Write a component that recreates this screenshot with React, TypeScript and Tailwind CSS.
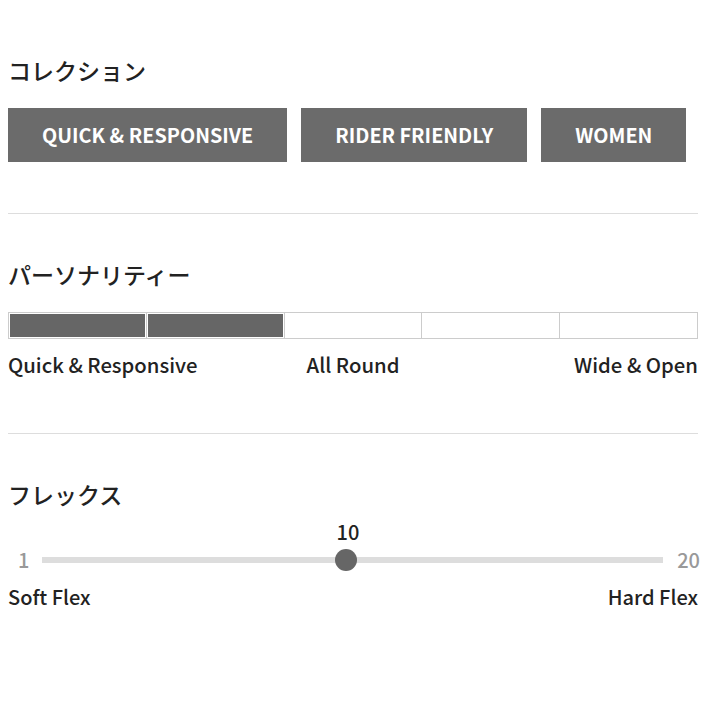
const font = { fontFamily: '"Noto Sans CJK JP", "Noto Sans", sans-serif' };

const collections = ["QUICK & RESPONSIVE", "RIDER FRIENDLY", "WOMEN"];

export default function App() {
  const filled = 2;
  return (
    <div style={font} className="w-[710px] h-[710px] bg-white pl-[8px] pr-[12px] pt-[54px] text-[#222]">
      {/* コレクション */}
      <h2 className="text-[23px] leading-[32px] font-medium">コレクション</h2>
      <div className="mt-[22px] flex gap-[14px]">
        {collections.map((c) => (
          <div
            key={c}
            className="h-[54px] px-[34px] flex items-center bg-[#6b6b6b] text-white text-[19.8px] font-bold"
          >
            {c}
          </div>
        ))}
      </div>
      <div className="mt-[51px] h-px bg-[#dddddd]" />

      {/* パーソナリティー */}
      <h2 className="mt-[44px] text-[23px] leading-[32px] font-medium">パーソナリティー</h2>
      <div className="mt-[22px] flex border border-[#cccccc]">
        {[0, 1, 2, 3, 4].map((i) => (
          <div key={i} className={`flex-1 p-px ${i > 0 ? "border-l border-[#cccccc]" : ""}`}>
            <div className={`h-[23px] ${i < filled ? "bg-[#666666]" : "bg-white"}`} />
          </div>
        ))}
      </div>
      <div className="mt-[11px] grid grid-cols-3 text-[20.3px] leading-[28px] font-medium">
        <span>Quick &amp; Responsive</span>
        <span className="text-center">All Round</span>
        <span className="text-right">Wide &amp; Open</span>
      </div>
      <div className="mt-[55px] h-px bg-[#dddddd]" />

      {/* フレックス */}
      <h2 className="mt-[44px] text-[23px] leading-[32px] font-medium">フレックス</h2>
      <div className="mt-[10px] ml-[318px] w-[44px] text-center text-[20px] leading-[24px] font-medium">10</div>
      <div className="mt-[5px] flex items-center h-[22px]">
        <span className="pl-[10px] w-[20px] text-[20px] text-[#999999] font-medium">1</span>
        <div className="relative flex-1 ml-[14px] mr-[14px] h-[6px] bg-[#dddddd]">
          <div className="absolute top-[-8px] left-[293px] w-[22px] h-[22px] rounded-full bg-[#666666]" />
        </div>
        <span className="text-[20px] text-[#999999] font-medium -mr-[2px]">20</span>
      </div>
      <div className="mt-[12px] flex justify-between text-[20px] leading-[28px] font-medium">
        <span>Soft Flex</span>
        <span>Hard Flex</span>
      </div>
    </div>
  );
}
